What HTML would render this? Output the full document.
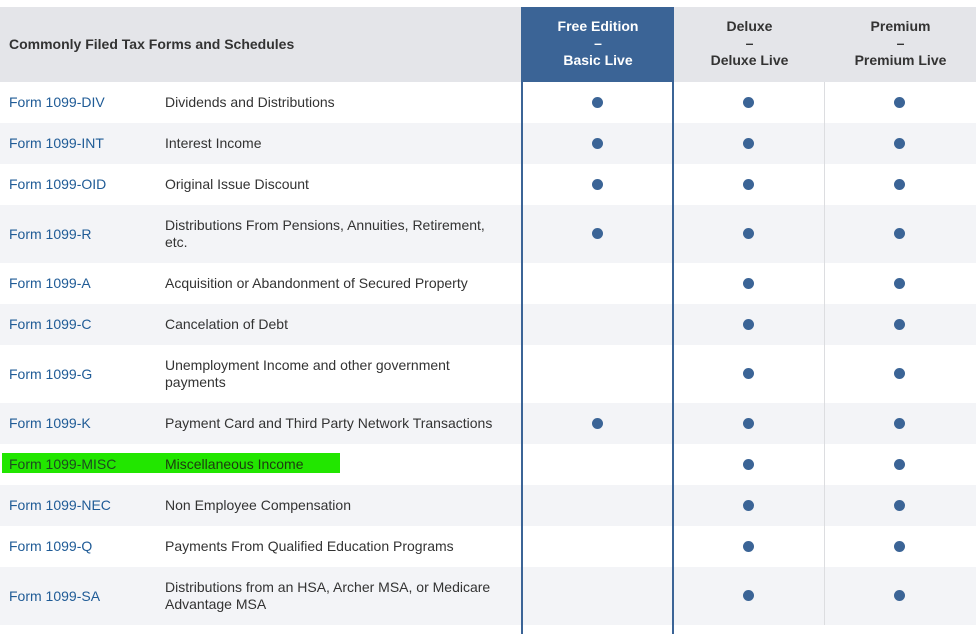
<!DOCTYPE html>
<html><head><style>
*{margin:0;padding:0;box-sizing:border-box}
body{width:980px;height:634px;background:#fff;font-family:"Liberation Sans",sans-serif;position:relative;overflow:hidden;font-size:14px;color:#333}
.r{position:absolute;left:0;width:976px}
.f{position:absolute;left:9px;color:#1f5b96}
.d{position:absolute;left:165px;line-height:17px;width:340px}
.dot{position:absolute;width:11px;height:11px;border-radius:50%;background:#3b6496}
.hd{position:absolute;top:7px;height:75px;text-align:center;font-weight:bold;font-size:14px;line-height:17px;padding-top:11px}
</style></head><body>
<div class="r" style="top:7px;height:75px;background:#e4e5e9"></div>
<div style="position:absolute;left:9px;top:36px;font-weight:bold;font-size:14px;color:#333">Commonly Filed Tax Forms and Schedules</div>
<div class="hd" style="left:522px;width:152px;background:#3b6496;color:#fff">Free Edition<br>–<br>Basic Live</div>
<div class="hd" style="left:674px;width:151px;color:#333">Deluxe<br>–<br>Deluxe Live</div>
<div class="hd" style="left:825px;width:151px;color:#333">Premium<br>–<br>Premium Live</div>

<div class="r" style="top:123px;height:41px;background:#f3f4f7"></div>
<div class="r" style="top:205px;height:58px;background:#f3f4f7"></div>
<div class="r" style="top:304px;height:41px;background:#f3f4f7"></div>
<div class="r" style="top:403px;height:41px;background:#f3f4f7"></div>
<div class="r" style="top:485px;height:41px;background:#f3f4f7"></div>
<div class="r" style="top:567px;height:58px;background:#f3f4f7"></div>
<div style="position:absolute;left:2px;top:453px;width:338px;height:20px;background:#22e600"></div>

<div style="position:absolute;left:824px;top:82px;width:1px;height:543px;background:#dcdde0"></div>
<div style="position:absolute;left:521px;top:7px;width:2px;height:627px;background:#3b6496"></div>
<div style="position:absolute;left:672px;top:7px;width:2px;height:627px;background:#3b6496"></div>

<div class="f" style="top:94px">Form 1099-DIV</div><div class="d" style="top:94px">Dividends and Distributions</div>
<div class="f" style="top:135px">Form 1099-INT</div><div class="d" style="top:135px">Interest Income</div>
<div class="f" style="top:176px">Form 1099-OID</div><div class="d" style="top:176px">Original Issue Discount</div>
<div class="f" style="top:226px">Form 1099-R</div><div class="d" style="top:217px">Distributions From Pensions, Annuities, Retirement, etc.</div>
<div class="f" style="top:275px">Form 1099-A</div><div class="d" style="top:275px">Acquisition or Abandonment of Secured Property</div>
<div class="f" style="top:316px">Form 1099-C</div><div class="d" style="top:316px">Cancelation of Debt</div>
<div class="f" style="top:366px">Form 1099-G</div><div class="d" style="top:357px">Unemployment Income and other government payments</div>
<div class="f" style="top:415px">Form 1099-K</div><div class="d" style="top:415px">Payment Card and Third Party Network Transactions</div>
<div class="f" style="top:456px;color:#1d4a20">Form 1099-MISC</div><div class="d" style="top:456px;color:#1d3a10">Miscellaneous Income</div>
<div class="f" style="top:497px">Form 1099-NEC</div><div class="d" style="top:497px">Non Employee Compensation</div>
<div class="f" style="top:538px">Form 1099-Q</div><div class="d" style="top:538px">Payments From Qualified Education Programs</div>
<div class="f" style="top:588px">Form 1099-SA</div><div class="d" style="top:579px">Distributions from an HSA, Archer MSA, or Medicare Advantage MSA</div>

<!-- dots: col centers 598,749,900 -->
<div class="dot" style="left:592px;top:97px"></div><div class="dot" style="left:743px;top:97px"></div><div class="dot" style="left:894px;top:97px"></div>
<div class="dot" style="left:592px;top:138px"></div><div class="dot" style="left:743px;top:138px"></div><div class="dot" style="left:894px;top:138px"></div>
<div class="dot" style="left:592px;top:179px"></div><div class="dot" style="left:743px;top:179px"></div><div class="dot" style="left:894px;top:179px"></div>
<div class="dot" style="left:592px;top:228px"></div><div class="dot" style="left:743px;top:228px"></div><div class="dot" style="left:894px;top:228px"></div>
<div class="dot" style="left:743px;top:278px"></div><div class="dot" style="left:894px;top:278px"></div>
<div class="dot" style="left:743px;top:319px"></div><div class="dot" style="left:894px;top:319px"></div>
<div class="dot" style="left:743px;top:368px"></div><div class="dot" style="left:894px;top:368px"></div>
<div class="dot" style="left:592px;top:418px"></div><div class="dot" style="left:743px;top:418px"></div><div class="dot" style="left:894px;top:418px"></div>
<div class="dot" style="left:743px;top:459px"></div><div class="dot" style="left:894px;top:459px"></div>
<div class="dot" style="left:743px;top:500px"></div><div class="dot" style="left:894px;top:500px"></div>
<div class="dot" style="left:743px;top:541px"></div><div class="dot" style="left:894px;top:541px"></div>
<div class="dot" style="left:743px;top:590px"></div><div class="dot" style="left:894px;top:590px"></div>
</body></html>
